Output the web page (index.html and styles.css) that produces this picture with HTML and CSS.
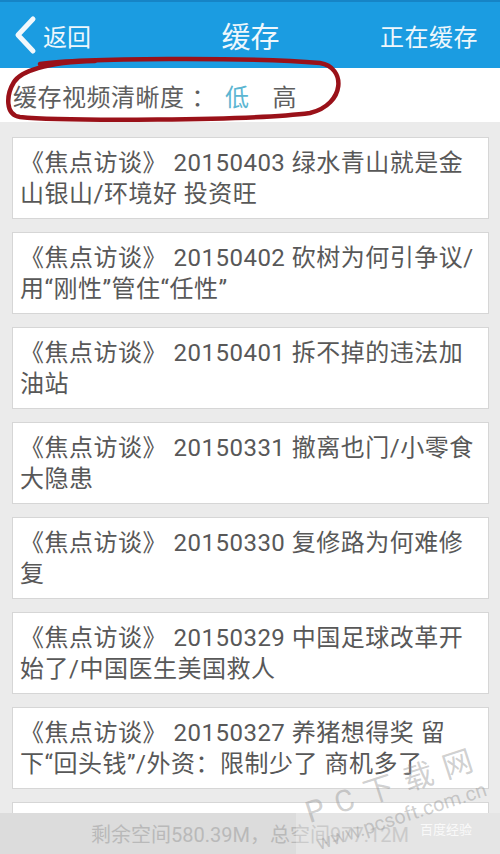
FILE: index.html
```html
<!DOCTYPE html>
<html lang="zh-CN">
<head>
    <meta charset="UTF-8">
    <meta name="viewport" content="width=device-width, initial-scale=1.0">
    <title>缓存</title>
    <link rel="stylesheet" href="styles.css">
</head>
<body>
    <div class="screen">
        <header class="topbar">
            <div class="back">
                <svg class="chevron" width="24" height="40" viewBox="0 0 24 40">
                    <path d="M20 4 L5 20 L20 36" fill="none" stroke="#f2f8fc" stroke-width="5" stroke-linecap="round" stroke-linejoin="round"/>
                </svg>
                <span>返回</span>
            </div>
            <h1 class="title">缓存</h1>
            <div class="action">正在缓存</div>
        </header>

        <div class="quality">
            <span class="label">缓存视频清晰度</span><span class="colon">：</span>
            <span class="opt active">低</span>
            <span class="opt">高</span>
            <svg class="circle" width="350" height="70" viewBox="0 56 350 70">
                <path d="M40 64 C80 58, 250 57, 320 63 C346 67, 346 104, 310 113 C250 121, 60 121, 20 117 C5 115, 6 95, 14 82 C20 72, 45 62, 95 61" fill="none" stroke="#9a1119" stroke-width="4.5" stroke-linecap="round"/>
            </svg>
        </div>

        <ul class="list">
            <li class="card">《焦点访谈》 20150403 绿水青山就是金<br>山银山/环境好 投资旺</li>
            <li class="card">《焦点访谈》 20150402 砍树为何引争议/<br>用“刚性”管住“任性”</li>
            <li class="card">《焦点访谈》 20150401 拆不掉的违法加<br>油站</li>
            <li class="card">《焦点访谈》 20150331 撤离也门/小零食<br>大隐患</li>
            <li class="card">《焦点访谈》 20150330 复修路为何难修<br>复</li>
            <li class="card">《焦点访谈》 20150329 中国足球改革开<br>始了/中国医生美国救人</li>
            <li class="card">《焦点访谈》 20150327 养猪想得奖 留<br>下“回头钱”/外资：限制少了 商机多了</li>
            <li class="card"></li>
        </ul>

        <footer class="footer">剩余空间580.39M，总空间977.12M</footer>

        <div class="stamp">百度经验</div>
        <span class="wm-big">P C 下 载 网</span>
        <span class="wm-url">www.pcsoft.com.cn</span>
    </div>
</body>
</html>
```
FILE: styles.css
```css
* {
    box-sizing: border-box;
}
body {
    margin: 0;
    font-family: Roboto, "Noto Sans CJK SC", sans-serif;
    background: #ebebeb;
}
.screen {
    position: relative;
    width: 500px;
    height: 854px;
    display: flex;
    flex-direction: column;
    overflow: hidden;
}
.topbar {
    height: 68px;
    flex: none;
    display: flex;
    align-items: center;
    justify-content: space-between;
    padding: 0 22px 0 13px;
    background: #1b9ce1;
    border-top: 2px solid #1684c6;
    color: #eef7fc;
}
.back {
    display: flex;
    align-items: center;
    gap: 6px;
    font-size: 24px;
    width: 120px;
}
.title {
    margin: 0;
    font-size: 29px;
    font-weight: normal;
}
.action {
    font-size: 24px;
    letter-spacing: 0.5px;
    width: 110px;
    text-align: right;
}
.quality {
    position: relative;
    height: 54px;
    flex: none;
    display: flex;
    align-items: center;
    padding-left: 13px;
    background: #fff;
    font-size: 24px;
    letter-spacing: 0.5px;
    color: #5e5e5e;
}
.colon {
    margin-left: 7px;
}
.opt {
    margin-left: 9px;
}
.opt + .opt {
    margin-left: 23px;
}
.opt.active {
    color: #5cb6d2;
}
.circle {
    position: absolute;
    left: 0;
    top: -12px;
}
.list {
    flex: 1;
    margin: 0;
    padding: 15px 11px 0 12px;
    list-style: none;
    overflow: hidden;
}
.card {
    height: 82px;
    margin-bottom: 13px;
    padding: 10px 6px 0 7px;
    background: #fff;
    border: 1px solid #d6d6d6;
    font-size: 24px;
    letter-spacing: 0.5px;
    line-height: 31px;
    white-space: nowrap;
    color: #585858;
}
.footer {
    height: 41px;
    flex: none;
    display: flex;
    align-items: center;
    justify-content: center;
    background: #dcdcdc;
    font-size: 20px;
    color: #b9b9b9;
}

/* watermarks laid over the screenshot */
.stamp {
    position: absolute;
    left: 296px;
    right: 0;
    bottom: 0;
    height: 41px;
    padding: 6px 0 0 124px;
    background: rgba(255, 255, 255, 0.25);
    font-size: 13px;
    color: rgba(255, 255, 255, 0.8);
    pointer-events: none;
}
.wm-big,
.wm-url {
    position: absolute;
    line-height: 1;
    white-space: nowrap;
    color: rgba(150, 150, 150, 0.45);
    transform-origin: 0 100%;
    pointer-events: none;
}
.wm-big {
    left: 311px;
    top: 798px;
    font-size: 30px;
    letter-spacing: 2px;
    transform: rotate(-18deg);
}
.wm-url {
    left: 320px;
    top: 833px;
    font-size: 20px;
    transform: rotate(-18deg);
}
```
